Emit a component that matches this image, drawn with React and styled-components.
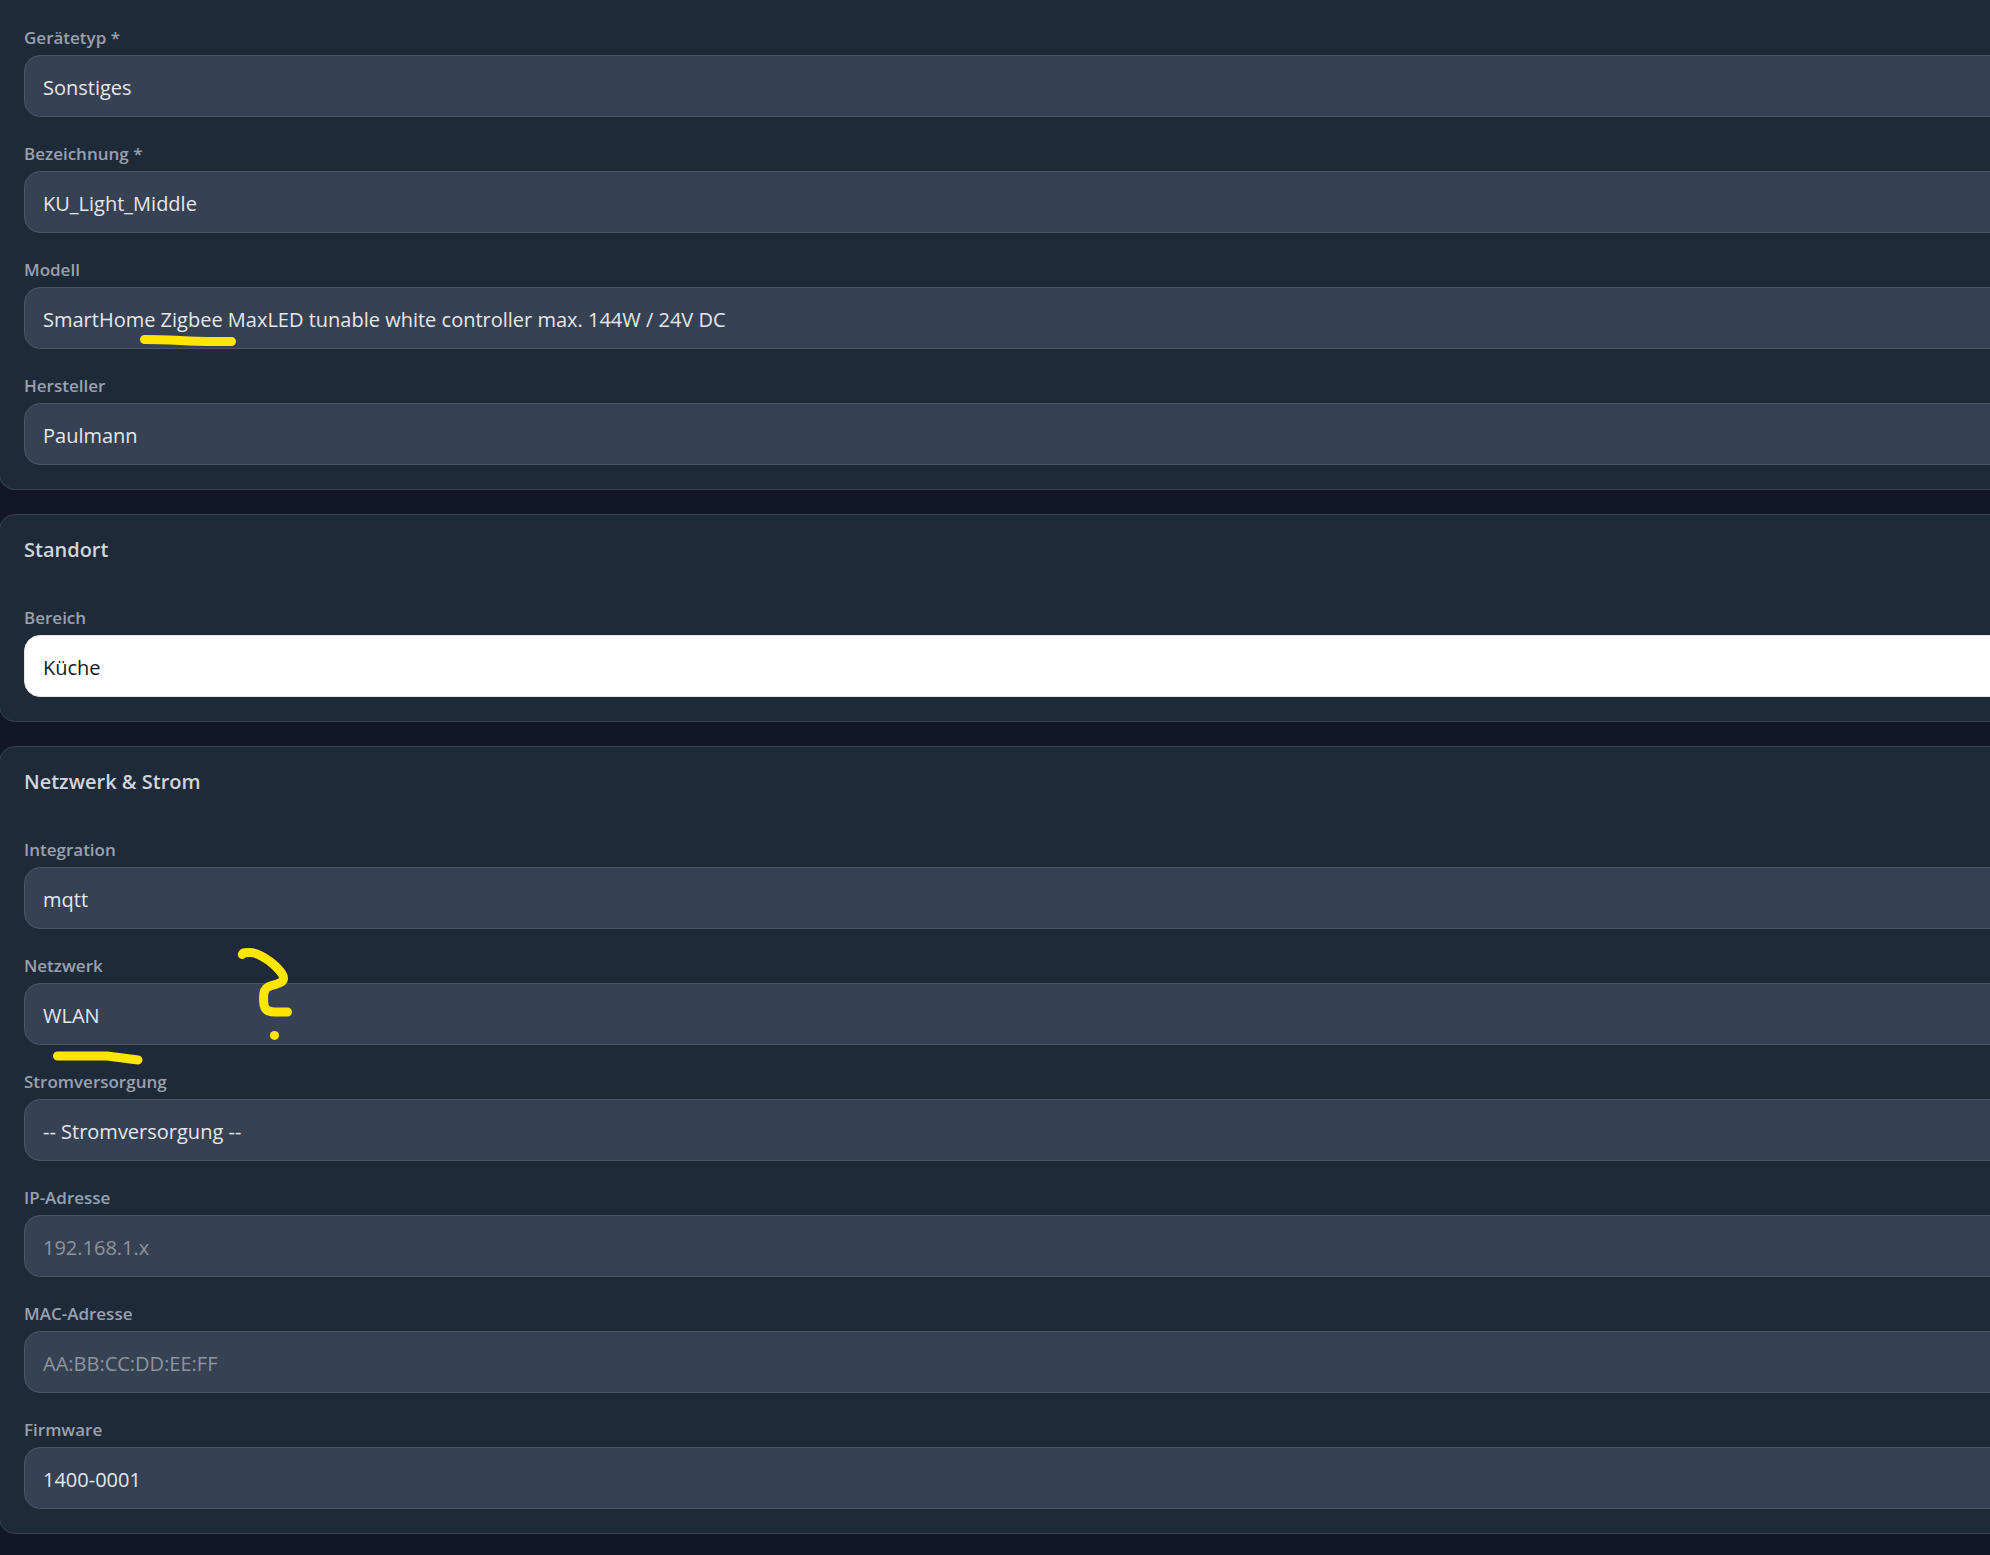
import React, { useState } from "react";
import styled, { createGlobalStyle } from "styled-components";

const GlobalStyle = createGlobalStyle`
  * {
    box-sizing: border-box;
  }
  body {
    margin: 0;
    background: #111726;
    font-family: "Segoe UI", "Open Sans", "Noto Sans", sans-serif;
  }
`;

const Form = styled.form`
  display: flex;
  flex-direction: column;
  gap: 24px;
  padding-bottom: 21px;
  overflow: hidden;
`;

/* the cards run past both sides of the window */
const Card = styled.section`
  display: flex;
  flex-direction: column;
  margin: 0 -64px 0 -1px;
  padding: 24px;
  background: #1f2a39;
  border: 1px solid #364153;
  border-radius: 16px;
  ${({ $cut }) =>
    $cut && "border-top: 0; border-top-left-radius: 0; padding-top: 25px;"}
`;

const CardTitle = styled.h2`
  margin: 0 0 44px;
  color: #d1d5dc;
  font-size: 20px;
  font-weight: 600;
  line-height: 22px;
`;

const Fields = styled.div`
  display: flex;
  flex-direction: column;
  gap: 24px;
`;

const FieldBox = styled.div`
  display: flex;
  flex-direction: column;
  gap: 4px;
`;

const Label = styled.label`
  color: #99a1af;
  font-size: 17px;
  font-weight: 600;
  line-height: 26px;
`;

const ControlBox = styled.div`
  position: relative;
  display: flex;
`;

const Control = styled.input`
  appearance: none;
  width: 100%;
  height: 62px;
  padding: 2px 18px 0;
  color: ${({ $light }) => ($light ? "#101828" : "#e5e7eb")};
  background: ${({ $light }) => ($light ? "#ffffff" : "#364153")};
  border: 1px solid ${({ $light }) => ($light ? "#e5e7eb" : "#4a5565")};
  border-radius: 16px;
  outline: none;
  font-family: inherit;
  font-size: 20px;
  &::placeholder {
    color: #8e949f;
    opacity: 1;
  }
`;

const Marker = styled.svg`
  position: absolute;
  top: 0;
  left: 0;
  overflow: visible;
  pointer-events: none;
  fill: none;
  stroke: #ffe600;
  stroke-width: 9;
  stroke-linecap: round;
  stroke-linejoin: round;
`;

const Field = ({ id, label, value = "", options, placeholder, light, children }) => {
  const [current, setCurrent] = useState(value);
  const onChange = (e) => setCurrent(e.target.value);

  return (
    <FieldBox>
      <Label htmlFor={id}>{label}</Label>
      <ControlBox>
        {options ? (
          <Control as="select" id={id} value={current} onChange={onChange} $light={light}>
            {options.map((option) => (
              <option key={option}>{option}</option>
            ))}
          </Control>
        ) : (
          <Control
            id={id}
            type="text"
            value={current}
            placeholder={placeholder}
            onChange={onChange}
          />
        )}
        {children}
      </ControlBox>
    </FieldBox>
  );
};

const App = () => {
  return (
    <>
      <GlobalStyle />
      <Form>
        <Card $cut>
          <Fields>
            <Field id="type" label="Gerätetyp *" value="Sonstiges" options={["Sonstiges"]} />
            <Field id="name" label="Bezeichnung *" value="KU_Light_Middle" />
            <Field
              id="model"
              label="Modell"
              value="SmartHome Zigbee MaxLED tunable white controller max. 144W / 24V DC"
            >
              <Marker width="240" height="62" aria-hidden="true">
                <path d="M120.5 52.5 C145 52.5 165 54.5 184 54.5 L207.5 54.5" />
              </Marker>
            </Field>
            <Field id="vendor" label="Hersteller" value="Paulmann" />
          </Fields>
        </Card>

        <Card>
          <CardTitle>Standort</CardTitle>
          <Fields>
            <Field id="area" label="Bereich" value="Küche" options={["Küche"]} light />
          </Fields>
        </Card>

        <Card>
          <CardTitle>Netzwerk &amp; Strom</CardTitle>
          <Fields>
            <Field id="integration" label="Integration" value="mqtt" />
            <Field id="network" label="Netzwerk" value="WLAN" options={["WLAN"]}>
              <Marker width="300" height="62" aria-hidden="true">
                <path d="M33.5 73 H83 L114 77" />
                <path d="M218.3 -28.5 C219 -30.5 222 -30.5 226 -30.5 C233 -30.5 240 -26 246 -21.5 C253 -16 259.5 -9 259.5 -5 C259.5 1 250 1 244 4 C240 6 239.5 10 239.5 15 C239.5 25 241 29 251 29 H263.5" />
                <path d="M250.4 52.4 h0.1" />
              </Marker>
            </Field>
            <Field
              id="power"
              label="Stromversorgung"
              value="-- Stromversorgung --"
              options={["-- Stromversorgung --"]}
            />
            <Field id="ip" label="IP-Adresse" placeholder="192.168.1.x" />
            <Field id="mac" label="MAC-Adresse" placeholder="AA:BB:CC:DD:EE:FF" />
            <Field id="firmware" label="Firmware" value="1400-0001" />
          </Fields>
        </Card>
      </Form>
    </>
  );
};

export default App;
